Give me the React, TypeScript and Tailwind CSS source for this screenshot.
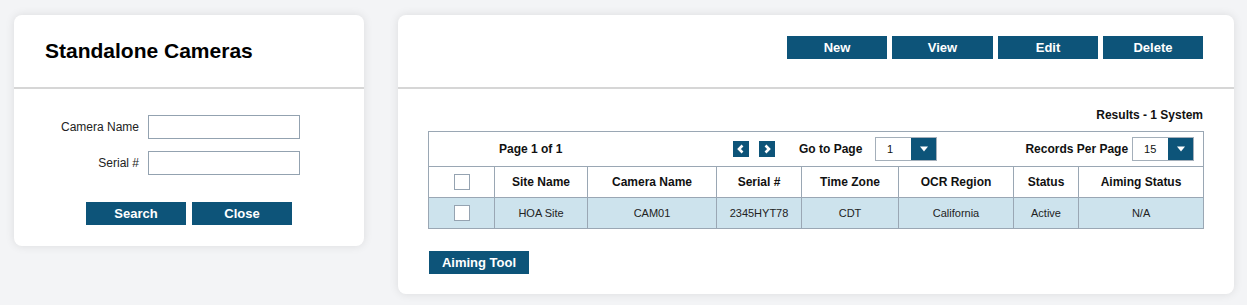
const font = { fontFamily: '"Liberation Sans", Arial, sans-serif' };

function BlueButton({ label, className = "" }: { label: string; className?: string }) {
  return (
    <button
      className={`h-[23px] w-[100px] bg-[#0d5479] text-[13px] font-bold text-white leading-none ${className}`}
    >
      {label}
    </button>
  );
}

function Checkbox() {
  return <div className="mx-auto h-[16px] w-[16px] border border-[#95a3b1] bg-white"></div>;
}

function ArrowButton({ dir }: { dir: "left" | "right" }) {
  return (
    <div className="flex h-[16px] w-[16px] items-center justify-center bg-[#0d5479]">
      <svg width="16" height="16" viewBox="0 0 16 16">
        {dir === "left" ? (
          <polyline points="9.5,4.5 6,8 9.5,11.5" fill="none" stroke="white" strokeWidth="2.6" />
        ) : (
          <polyline points="6.5,4.5 10,8 6.5,11.5" fill="none" stroke="white" strokeWidth="2.6" />
        )}
      </svg>
    </div>
  );
}

function Select({ value }: { value: string }) {
  return (
    <div className="flex h-[24px] w-[62px] border border-[#a4afba] bg-white">
      <div className="flex flex-1 items-center pl-[11px] text-[11px] text-[#111]">{value}</div>
      <div className="flex w-[25px] items-center justify-center bg-[#0d5479]">
        <svg width="10" height="6" viewBox="0 0 10 6">
          <polygon points="1,0.5 9,0.5 5,5.5" fill="white" />
        </svg>
      </div>
    </div>
  );
}

const columns = [
  { name: "", w: 66 },
  { name: "Site Name", w: 93 },
  { name: "Camera Name", w: 129 },
  { name: "Serial #", w: 85 },
  { name: "Time Zone", w: 97 },
  { name: "OCR Region", w: 115 },
  { name: "Status", w: 65 },
  { name: "Aiming Status", w: 125 },
];

const rows = [["HOA Site", "CAM01", "2345HYT78", "CDT", "California", "Active", "N/A"]];

export default function App() {
  return (
    <div className="min-h-screen bg-[#f3f4f6] pl-[14px] pt-[15px] text-[#111]" style={font}>
      <div className="flex items-start gap-[34px]">
        {/* search panel */}
        <div className="w-[350px] rounded-[8px] bg-white shadow-[0_0_10px_rgba(0,0,0,0.10)]">
          <div className="flex h-[74px] items-center border-b-2 border-[#d6d6d6] pl-[31px]">
            <h1 className="text-[21px] font-bold text-black">Standalone Cameras</h1>
          </div>
          <div className="flex flex-col gap-[12px] pt-[26px]">
            <div className="flex items-center">
              <label className="w-[125px] text-right text-[12px] text-[#222]">Camera Name</label>
              <input className="ml-[9px] h-[24px] w-[152px] border border-[#93a2b0] bg-white outline-none" />
            </div>
            <div className="flex items-center">
              <label className="w-[125px] text-right text-[12px] text-[#222]">Serial #</label>
              <input className="ml-[9px] h-[24px] w-[152px] border border-[#93a2b0] bg-white outline-none" />
            </div>
          </div>
          <div className="flex justify-center gap-[6px] pb-[21px] pt-[27px]">
            <BlueButton label="Search" />
            <BlueButton label="Close" />
          </div>
        </div>

        {/* results panel */}
        <div className="w-[836px] rounded-[8px] bg-white shadow-[0_0_10px_rgba(0,0,0,0.10)]">
          <div className="flex h-[74px] items-start justify-end gap-[5px] border-b-2 border-[#d6d6d6] pr-[31px] pt-[21px]">
            <BlueButton label="New" />
            <BlueButton label="View" className="w-[101px]" />
            <BlueButton label="Edit" />
            <BlueButton label="Delete" />
          </div>
          <div className="pb-[20px] pl-[30px] pr-[31px] pt-[19px]">
            <div className="mb-[9px] text-right text-[12px] font-bold leading-[14px]">Results - 1 System</div>
            <table className="w-[775px] table-fixed border-collapse border border-[#9aa7b4] text-[12px]">
              <colgroup>
                {columns.map((c, i) => (
                  <col key={i} style={{ width: c.w }} />
                ))}
              </colgroup>
              <tbody>
                <tr>
                  <td colSpan={8} className="border border-[#9aa7b4] p-0">
                    <div className="flex h-[34px] items-center pr-[9px]">
                      <div className="w-[304px] pl-[70px] font-bold">Page 1 of 1</div>
                      <div className="flex gap-[10px]">
                        <ArrowButton dir="left" />
                        <ArrowButton dir="right" />
                      </div>
                      <span className="ml-[24px] w-[76px] font-bold">Go to Page</span>
                      <Select value="1" />
                      <div className="flex-1"></div>
                      <span className="mr-[4px] font-bold">Records Per Page</span>
                      <Select value="15" />
                    </div>
                  </td>
                </tr>
                <tr className="h-[31px]">
                  {columns.map((c, i) => (
                    <th key={i} className="border border-[#9aa7b4] p-0 text-center font-bold">
                      {i === 0 ? <Checkbox /> : c.name}
                    </th>
                  ))}
                </tr>
                {rows.map((r, ri) => (
                  <tr key={ri} className="h-[31px] bg-[#cde3ed]">
                    <td className="border border-[#9aa7b4] p-0">
                      <Checkbox />
                    </td>
                    {r.map((v, vi) => (
                      <td key={vi} className="border border-[#9aa7b4] p-0 text-center text-[11px] text-[#222]">
                        {v}
                      </td>
                    ))}
                  </tr>
                ))}
              </tbody>
            </table>
            <BlueButton label="Aiming Tool" className="ml-[1px] mt-[22px]" />
          </div>
        </div>
      </div>
    </div>
  );
}
